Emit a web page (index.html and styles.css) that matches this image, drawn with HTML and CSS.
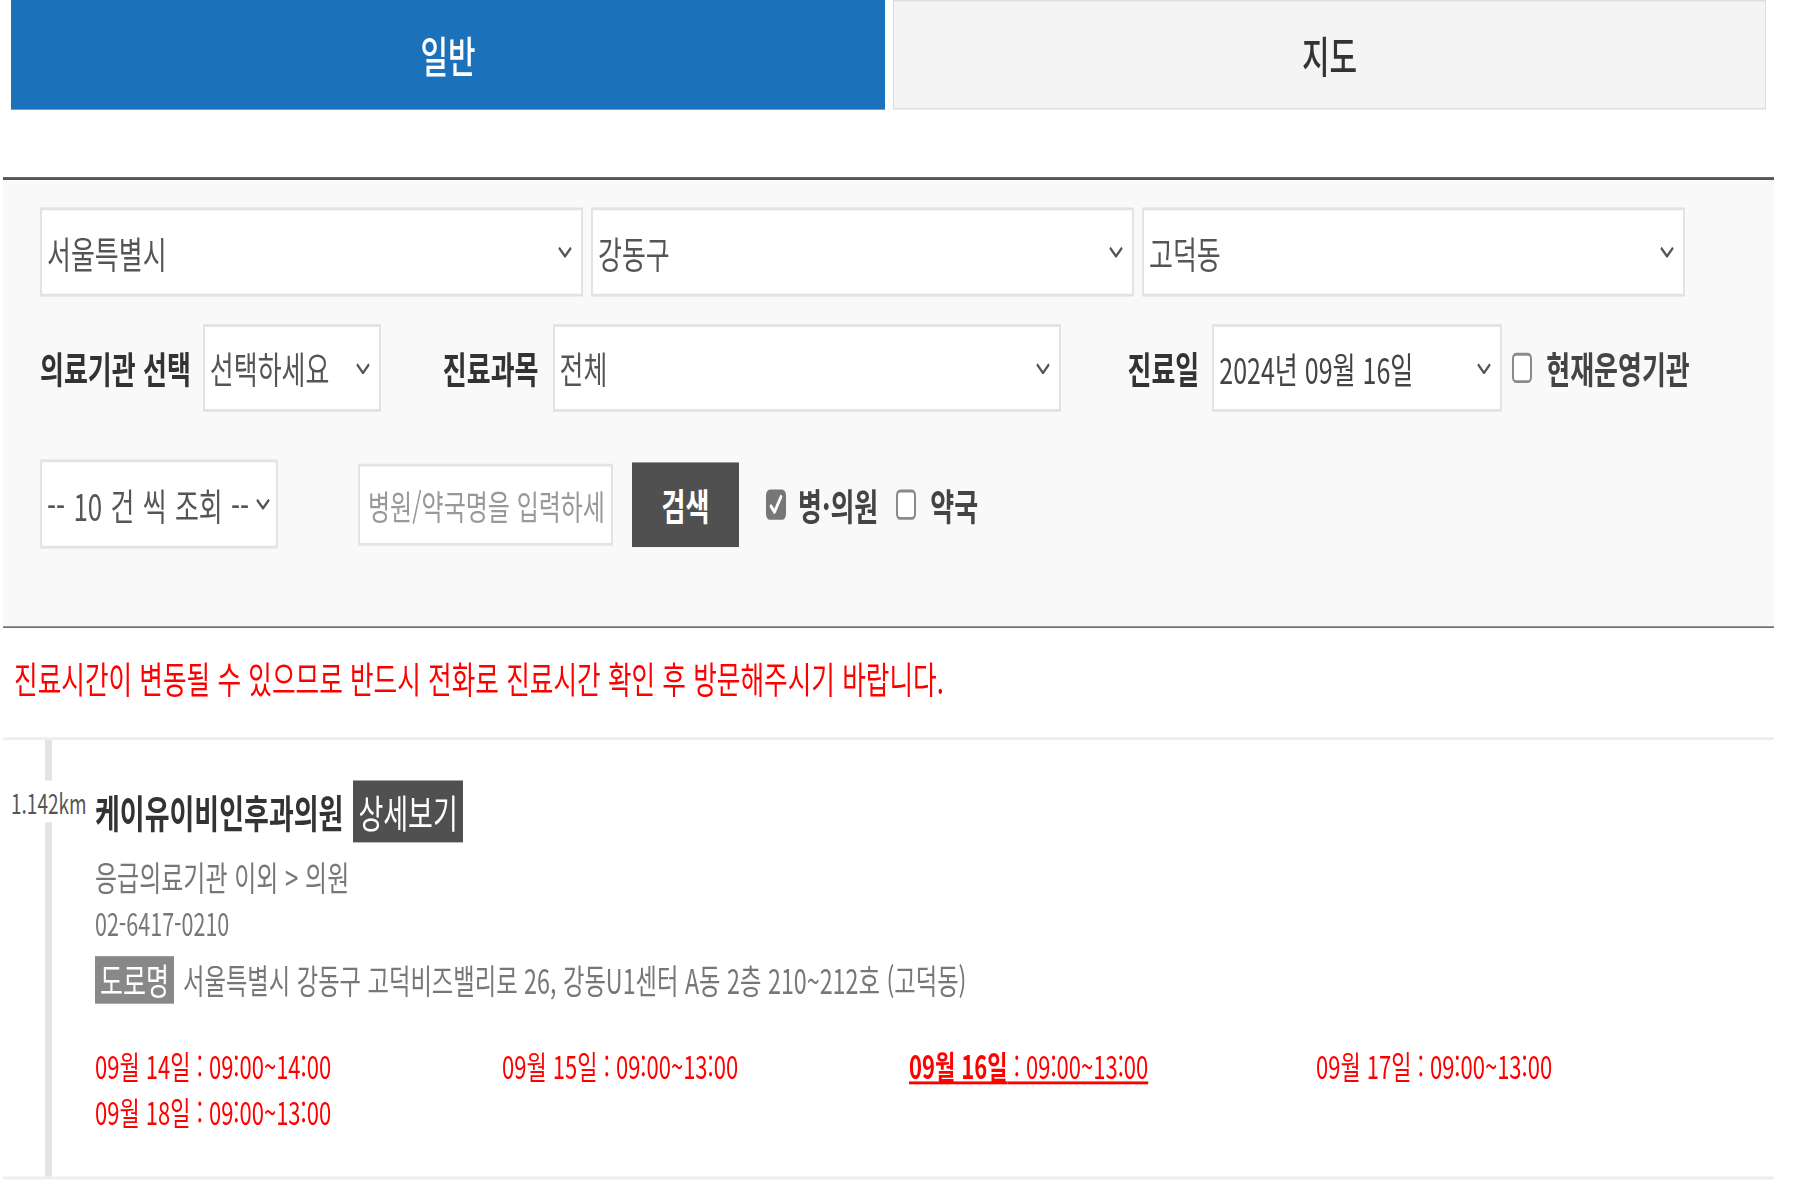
FILE: index.html
```html
<!DOCTYPE html>
<html lang="ko">
<head>
    <meta charset="UTF-8">
    <title>진료기관 검색</title>
    <link rel="stylesheet" href="styles.css">
</head>
<body>
    <div class="page">
        <div class="tabs">
            <div class="tab active">일반</div>
            <div class="tab">지도</div>
        </div>

        <form class="search-box">
            <div class="row row-area">
                <select class="sel sel-area"><option>서울특별시</option></select>
                <select class="sel sel-area"><option>강동구</option></select>
                <select class="sel sel-area"><option>고덕동</option></select>
            </div>
            <div class="row row-filter">
                <span class="label">의료기관 선택</span>
                <select class="sel sel-type"><option>선택하세요</option></select>
                <span class="label label-dept">진료과목</span>
                <select class="sel sel-dept"><option>전체</option></select>
                <span class="label label-date">진료일</span>
                <select class="sel sel-date"><option>2024년 09월 16일</option></select>
                <label class="opt opt-open"><span class="check"></span>현재운영기관</label>
            </div>
            <div class="row row-query">
                <select class="sel sel-count"><option>-- 10 건 씩 조회 --</option></select>
                <input class="keyword" type="text" placeholder="병원/약국명을 입력하세요">
                <button class="btn-search" type="button">검색</button>
                <label class="opt opt-hosp">
                    <span class="check on">
                        <svg width="20" height="21" viewBox="0 0 20 21"><path d="M5 11.5l3.5 4L15 5" fill="none" stroke="#fff" stroke-width="2.6" stroke-linecap="round" stroke-linejoin="round"/></svg>
                    </span>병·의원
                </label>
                <label class="opt opt-pharm"><span class="check"></span>약국</label>
            </div>
        </form>

        <p class="notice">진료시간이 변동될 수 있으므로 반드시 전화로 진료시간 확인 후 방문해주시기 바랍니다.</p>

        <ul class="result-list">
            <li class="result">
                <div class="item">
                    <span class="distance">1.142km</span>
                    <div class="title-row">
                        <strong class="name">케이유이비인후과의원</strong>
                        <a class="detail">상세보기</a>
                    </div>
                    <div class="category">응급의료기관 이외 &gt; 의원</div>
                    <div class="phone">02-6417-0210</div>
                    <div class="address">
                        <span class="badge">도로명</span>
                        <span>서울특별시 강동구 고덕비즈밸리로 26, 강동U1센터 A동 2층 210~212호 (고덕동)</span>
                    </div>
                    <ul class="schedule">
                        <li>09월 14일 : 09:00~14:00</li>
                        <li>09월 15일 : 09:00~13:00</li>
                        <li class="today"><b>09월 16일</b> : 09:00~13:00</li>
                        <li>09월 17일 : 09:00~13:00</li>
                        <li>09월 18일 : 09:00~13:00</li>
                    </ul>
                </div>
            </li>
        </ul>
    </div>
</body>
</html>
```

FILE: styles.css
```css
html,
body {
    min-height: 1200px;
}

body {
    margin: 0;
    background: #fff;
    color: #555;
    font-family: "Noto Sans CJK KR", "Noto Sans", sans-serif;
}

/* the whole page is drawn tall and narrow */
.page {
    width: 1774px;
    min-height: 840px;
    transform: scaleY(1.44);
    transform-origin: 0 0;
}

.tabs {
    display: flex;
    gap: 8px;
    padding-left: 11px;
}

.tab {
    box-sizing: border-box;
    flex: 0 0 873px;
    height: 76px;
    display: flex;
    align-items: center;
    justify-content: center;
    font-size: 30px;
    font-weight: 500;
    color: #333;
    background: #f4f4f4;
    border: 1px solid #ddd;
}

.tab.active {
    flex-basis: 874px;
    background: #1b71ba;
    border-color: #1b71ba;
    color: #fff;
}

.search-box {
    margin: 47px 0 0 3px;
    padding: 19px 0 54px 37px;
    background: #f9f9f9;
    border-top: 2px solid #555;
    border-bottom: 1px solid #555;
}

.row {
    display: flex;
    align-items: center;
}

.row-area {
    gap: 8px;
}

.row-filter {
    margin-top: 19px;
}

.row-query {
    margin-top: 33px;
}

.sel {
    box-sizing: border-box;
    appearance: none;
    -webkit-appearance: none;
    height: 62px;
    margin: 0;
    padding: 0 30px 0 5px;
    border: 2px solid #e3e3e3;
    border-radius: 0;
    background: #fff url("data:image/svg+xml,%3Csvg xmlns='http://www.w3.org/2000/svg' width='14' height='8' viewBox='0 0 14 8'%3E%3Cpath d='M1 1l6 6 6-6' fill='none' stroke='%23555' stroke-width='2'/%3E%3C/svg%3E") no-repeat right 9px center;
    font-family: inherit;
    font-size: 26px;
    color: #555;
}

.sel-area {
    width: 543px;
}

.label {
    font-size: 26px;
    font-weight: bold;
    color: #333;
    white-space: nowrap;
}

.sel-type {
    width: 178px;
    height: 61px;
    margin-left: 12px;
}

.label-dept {
    margin-left: 62px;
}

.sel-dept {
    width: 508px;
    height: 61px;
    margin-left: 14px;
}

.label-date {
    margin-left: 67px;
}

.sel-date {
    width: 290px;
    height: 61px;
    margin-left: 13px;
    font-size: 25px;
    color: #444;
}

.opt {
    display: flex;
    align-items: center;
    font-size: 26px;
    font-weight: bold;
    color: #444;
    white-space: nowrap;
}

.check {
    box-sizing: border-box;
    width: 20px;
    height: 21px;
    margin-right: 14px;
    border: 2px solid #8a8a8a;
    border-radius: 4px;
    background: #fff;
}

.check.on {
    background: #777;
    border-color: #777;
    margin-right: 12px;
}

.check svg {
    display: block;
    margin: -2px;
}

.opt-open {
    margin-left: 10px;
}

.sel-count {
    width: 238px;
    padding-right: 20px;
    background-position: right 6px center;
    word-spacing: 1px;
}

.keyword {
    box-sizing: border-box;
    width: 255px;
    height: 57px;
    margin-left: 80px;
    padding: 0 8px;
    border: 2px solid #e3e3e3;
    background: #fff;
    font-family: inherit;
    font-size: 24px;
    color: #555;
}

.keyword::placeholder {
    color: #999;
}

.btn-search {
    width: 107px;
    height: 59px;
    margin-left: 19px;
    border: none;
    background: #505050;
    color: #fff;
    font-family: inherit;
    font-size: 26px;
    font-weight: bold;
}

.opt-hosp {
    margin-left: 27px;
}

.opt-pharm {
    margin-left: 18px;
}

.notice {
    margin: 0 0 0 3px;
    padding: 17px 0 23px 11px;
    border-bottom: 2px solid #eee;
    color: #f00;
    font-size: 25.7px;
    line-height: 36px;
}

.result-list {
    list-style: none;
    margin: 0 0 0 3px;
    padding: 0;
}

.result {
    padding-left: 42px;
    border-bottom: 2px solid #eee;
}

.item {
    position: relative;
    padding: 28px 0 30px 43px;
    border-left: 7px solid #e3e3e3;
}

.distance {
    position: absolute;
    left: -41px;
    top: 28px;
    height: 29px;
    line-height: 29px;
    background: #fff;
    font-size: 19px;
    color: #555;
}

.title-row {
    display: flex;
    align-items: center;
    height: 43px;
}

.name {
    font-size: 27px;
    color: #333;
}

.detail {
    margin-left: 10px;
    padding: 0 5px;
    height: 43px;
    line-height: 43px;
    background: #505050;
    color: #fff;
    font-size: 27px;
}

.category {
    margin-top: 8px;
    font-size: 24px;
    line-height: 32px;
    color: #777;
}

.phone {
    font-size: 21.5px;
    line-height: 32px;
    color: #777;
}

.address {
    display: flex;
    align-items: center;
    gap: 9px;
    margin-top: 6px;
    font-size: 23.3px;
    color: #777;
}

.badge {
    height: 33px;
    line-height: 33px;
    padding: 0 5px;
    background: #888;
    color: #fff;
    font-size: 25px;
}

.schedule {
    display: grid;
    grid-template-columns: repeat(4, 407px);
    margin: 26px 0 0;
    padding: 0;
    list-style: none;
    font-size: 22px;
    line-height: 32px;
    color: #f00;
}

.schedule .today {
    text-decoration: underline;
}
```
